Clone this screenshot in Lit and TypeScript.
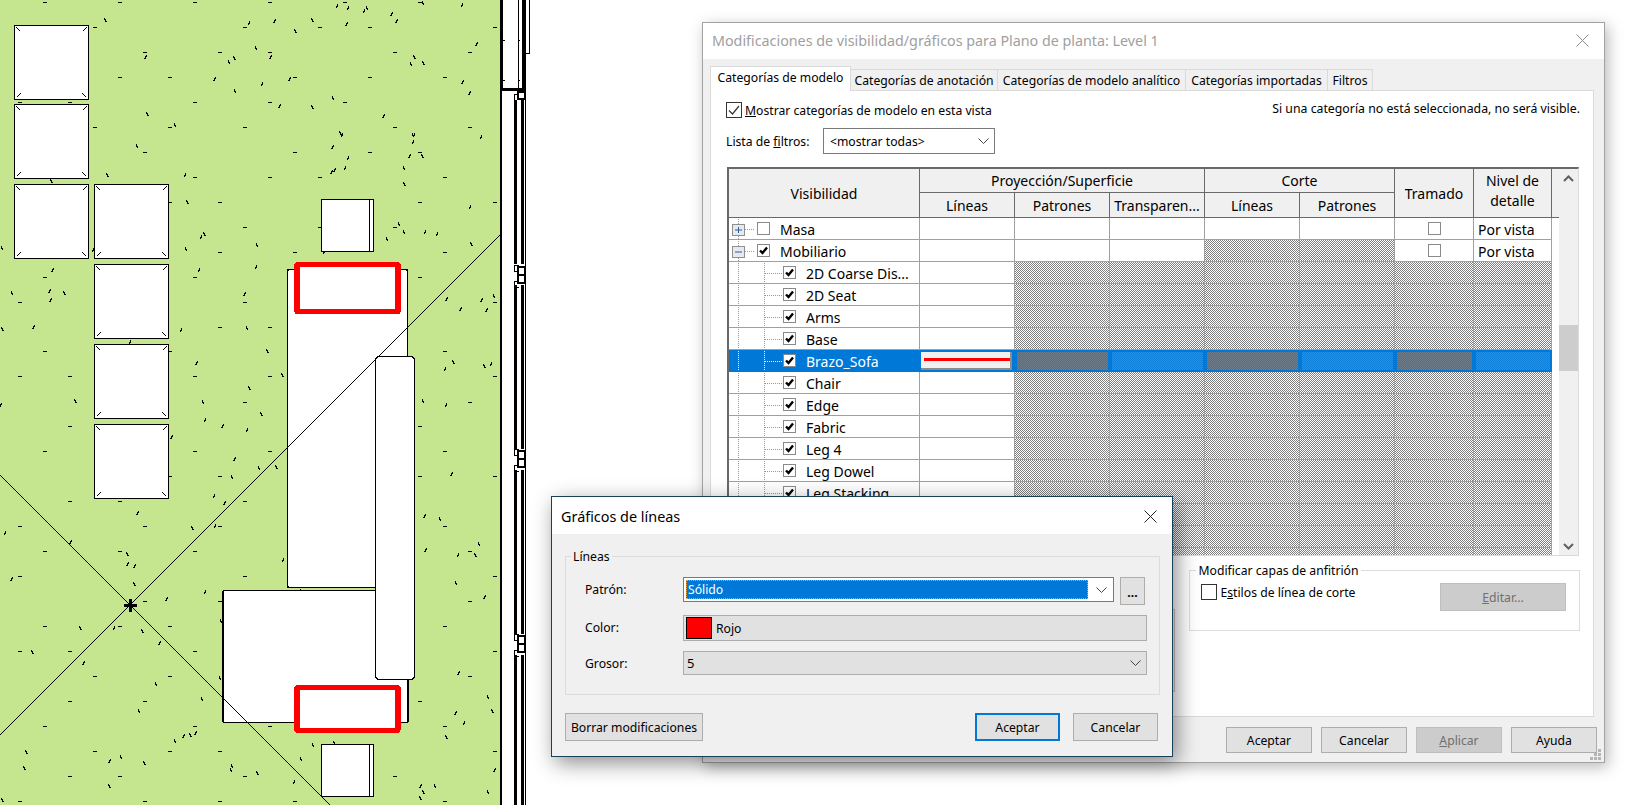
import { LitElement, html, css, svg } from "lit";
import { customElement } from "lit/decorators.js";

/* ---------- CAD canvas ---------- */
const H_ROWS: [number, number, number[]][] = [
  [0, 7, [130,348,566,784,1002,1220]],[0, 82, [275,711,929,1075,1438]],[0, 157, [420,638,784,1147,1365]],
  [0, 232, [348,493,857,1075,1292]],[0, 307, [57,203,566,784,1002]],[0, 382, [275,493,711,1147,1365]],
  [0, 457, [420,857,1075,1220]],[0, 532, [566,784,929,1292]],[0, 607, [493,638,1220,1438]],
  [0, 682, [711,929,1147]],[0, 757, [638,857,1292]],[0, 832, [130,566,1220]],[0, 907, [57,711,1438]],
  [0, 982, [638,784]],[0, 1054, [130,493,1292]],[0, 1129, [57,203,566,784,1438]],
  [400, 5, [711,1365]],[400, 79, [203,1220]],[400, 154, [130,566,784,1292]],[400, 229, [493,638,1220,1438]],
  [400, 304, [203,348,711]],[400, 379, [57,420,638,1292]],[400, 454, [130,348,566,1365]],[400, 529, [57,711,1438]],
  [400, 604, [420,638,1365]],[400, 679, [130,348,493,1292]],[400, 754, [57,203,566,1438]],[400, 829, [275,493,1365]],
  [400, 904, [203,420,1220]],[400, 979, [130,566,784,1292]],[400, 1054, [275,493,638,1438]],
  [400, 1129, [203,348,711,1147]],[400, 1204, [57,420,638,857,1292]],
];
function seeded(seed: number) {
  let s = seed;
  return () => { s = (s * 1664525 + 1013904223) >>> 0; return s / 4294967296; };
}
function grassTicks() {
  const out: string[] = [];
  for (const [base, zy, xs] of H_ROWS) {
    const y = Math.round(base + zy / 3) + 0.5;
    for (const zx of xs) {
      const x = Math.round(zx / 2.904);
      out.push(`M${x - 2} ${y}h4`);
    }
  }
  const r = seeded(77);
  for (let i = 0; i < 250; i++) {
    const x = Math.round(r() * 496) + 0.5;
    const y = Math.round(r() * 800) + 0.5;
    const dir = r() < 0.5 ? 1 : -1;
    const w = r() < 0.5 ? 1 : 2;
    out.push(`M${x} ${y}l${dir * w} 4`);
  }
  return out.join("");
}
const TICKS = grassTicks();

const SQUARES = [
  [14.5, 25.5],[14.5, 104.5],[14.5, 184.5],[94.5, 184.5],[94.5, 264.5],[94.5, 344.5],[94.5, 424.5],
];
const SQ = 74;

@customElement("cad-canvas")
class CadCanvas extends LitElement {
  static styles = css`
    :host { display: block; width: 540px; height: 805px; }
    svg { display: block; }
    .k { fill: none; stroke: #000; stroke-width: 1; }
    .w2 { fill: #fff; stroke: #000; stroke-width: 1.4; }
    .red { fill: #fff; stroke: #f00; stroke-width: 5.4; }
    .blk { fill: #000; }
  `;
  square(x: number, y: number) {
    const r = x + SQ, b = y + SQ;
    return svg`<rect class="w2" x=${x} y=${y} width=${SQ} height=${SQ}></rect>
      <path class="k" d="M${x + 2} ${y + 2}l4 4M${r - 2} ${y + 2}l-4 4M${x + 2} ${b - 2}l4 -4M${r - 2} ${b - 2}l-4 -4"></path>`;
  }
  side(y: number) {
    return svg`<rect class="w2" x="321.5" y=${y} width="52" height="52"></rect>
      <path class="k" d="M369.5 ${y}v52"></path>`;
  }
  cluster(y: number) {
    return svg`<path class="k" d="M518.5 ${y - 2}h-4v6h3M518.5 ${y + 20}h-4v-6h3" ></path>
      <rect x="518" y=${y} width="7" height="8" fill="#fff" stroke="#000" stroke-width="2"></rect>
      <rect x="518" y=${y + 8} width="7" height="8" fill="#fff" stroke="#000" stroke-width="2"></rect>`;
  }
  render() {
    const segs = [[100, 264], [285, 449], [470, 634], [655, 805]];
    return html`<svg width="540" height="805" viewBox="0 0 540 805" shape-rendering="crispEdges">
      <rect x="0" y="0" width="500" height="805" fill="#c5e58f"></rect>
      <path class="k" d=${TICKS}></path>
      ${SQUARES.map(([x, y]) => this.square(x, y))}
      ${this.side(199.5)} ${this.side(744.5)}
      <rect class="w2" x="287.5" y="269.5" width="120" height="318" rx="2"></rect>
      <rect class="w2" x="223" y="590.5" width="185" height="132" rx="2"></rect>
      <path class="k" d="M500 235L0 735M0 475L330 805"></path>
      <rect class="w2" x="375.5" y="356.5" width="39" height="323" rx="4"></rect>
      <rect class="red" x="297" y="264.7" width="101" height="47" rx="1"></rect>
      <rect class="red" x="297" y="687.7" width="101" height="42.5" rx="1"></rect>
      <rect class="blk" x="124" y="604" width="13" height="3"></rect>
      <rect class="blk" x="129" y="599" width="3" height="13"></rect>
      <rect class="blk" x="500" y="0" width="1.5" height="805"></rect>
      <rect class="blk" x="500" y="0" width="3" height="91"></rect>
      <rect class="blk" x="500" y="88" width="26" height="3"></rect>
      <rect class="blk" x="522" y="0" width="4" height="91"></rect>
      <rect class="blk" x="518" y="0" width="1" height="88"></rect>
      <path class="k" d="M529.5 0V53H526M503 40.5h2M503 80.5h2M518 40.5h2M518 80.5h2"></path>
      ${segs.map(([a, b]) => svg`
        <rect class="blk" x="514" y=${a} width="3" height=${b - a}></rect>
        <rect class="blk" x="521" y=${a} width="2.5" height=${b - a}></rect>`)}
      <rect class="blk" x="525" y="91" width="1" height="714"></rect>
      <rect x="518" y="92" width="7" height="7" fill="#fff" stroke="#000" stroke-width="2"></rect>
      <path class="k" d="M514.5 100V94h3"></path>
      ${this.cluster(267)} ${this.cluster(451)} ${this.cluster(636)}
    </svg>`;
  }
}

/* ---------- shared bits ---------- */
const shared = css`
  * { box-sizing: border-box; }
  u { text-decoration: underline; text-underline-offset: 1px; }
  .btn {
    display: flex; align-items: center; justify-content: center;
    background: #e1e1e1; border: 1px solid #adadad; color: #000;
    font-size: 12.2px; white-space: nowrap;
  }
  .btn.off { background: #ccc; color: #6f6f6f; border-color: #bfbfbf; }
  .chev { display: block; flex: none; }
  fieldset { margin: 0; min-width: 0; border: 1px solid #dcdcdc; }
  legend { font-size: 12.2px; line-height: 17px; padding: 0 2px; color: #000; }
`;
const chevron = (c = "#444") => html`<svg class="chev" width="11" height="6" viewBox="0 0 11 6"><path d="M.5 .5L5.5 5.5L10.5 .5" fill="none" stroke=${c}></path></svg>`;
const closeX = (c: string, s = 13) => html`<svg width=${s} height=${s} viewBox="0 0 13 13"><path d="M.5 .5L12.5 12.5M12.5 .5L.5 12.5" fill="none" stroke=${c}></path></svg>`;
const bigBox = (checked: boolean) => html`<svg width="16" height="16" viewBox="0 0 16 16"><rect x=".5" y=".5" width="15" height="15" fill="#fff" stroke="#333"></rect>${checked ? svg`<path d="M3 8.5L6.5 12L13 4" fill="none" stroke="#333" stroke-width="1.2"></path>` : ""}</svg>`;

/* ---------- table tree cell drawing ---------- */
const boxAt = (x: number, on: boolean) => svg`
  <rect x=${x + 0.5} y="4.5" width="12" height="12" fill="#fff" stroke="#8a8a8a"></rect>
  ${on ? svg`<path d="M${x + 3} 10.5L${x + 5.5} 13L${x + 10} 7.5" fill="none" stroke="#000" stroke-width="2.4"></path>` : ""}`;

type Row = { name: string; level: 0 | 1; on: boolean; exp?: "+" | "-"; picked?: boolean; hatch: number[] };
const CHILD_HATCH = [2, 3, 4, 5, 6, 7];
const ROWS: Row[] = [
  { name: "Masa", level: 0, on: false, exp: "+", hatch: [] },
  { name: "Mobiliario", level: 0, on: true, exp: "-", hatch: [4, 5] },
  ...["2D Coarse Dis...", "2D Seat", "Arms", "Base"].map((name) => ({ name, level: 1 as const, on: true, hatch: CHILD_HATCH })),
  { name: "Brazo_Sofa", level: 1, on: true, picked: true, hatch: CHILD_HATCH },
  ...["Chair", "Edge", "Fabric", "Leg 4", "Leg Dowel", "Leg Stacking", "", "", "", ""].map((name) => ({ name, level: 1 as const, on: true, hatch: CHILD_HATCH })),
];

/* ---------- Visibility dialog ---------- */
@customElement("vg-dialog")
class VgDialog extends LitElement {
  static styles = [shared, css`
    :host {
      box-sizing: border-box;
      display: flex; flex-direction: column; position: absolute; left: 702px; top: 22px;
      width: 903px; height: 741px; background: #f0f0f0; border: 1px solid #a3a3a3;
      box-shadow: 3px 4px 14px rgba(0,0,0,.28);
      font-family: "Noto Sans", sans-serif; font-size: 12.2px; color: #000;
    }
    .title { height: 36px; flex: none; background: #fff; display: flex; align-items: center; justify-content: space-between; padding: 0 15px 2px 9px; color: #a0a0a0; font-size: 14.3px; }
    .tabs { height: 31px; flex: none; display: flex; align-items: flex-end; padding-left: 7px; position: relative; z-index: 1; }
    .tab { height: 21px; border: 1px solid #dadada; border-bottom: none; border-left: none; display: flex; align-items: center; justify-content: center; white-space: nowrap; }
    .tab.on { height: 25px; background: #fff; border-left: 1px solid #dadada; margin-bottom: -1px; padding-bottom: 3px; }
    .panel { flex: 1; margin: 0 10px 0 7px; background: #fff; border: 1px solid #dadada; padding: 11px 13px 0 16px; display: flex; flex-direction: column; min-height: 0; }
    .top { display: flex; justify-content: space-between; height: 16px; margin-left: -1px; }
    .chk { display: flex; align-items: center; gap: 3px; white-space: nowrap; }
    .chk svg { flex: none; display: block; }
    .note { line-height: 14px; font-size: 12.3px; }
    .filter { display: flex; align-items: center; height: 26px; margin: 10px 0 0 -1px; }
    .filter label { width: 97px; flex: none; }
    .combo { width: 172px; height: 26px; border: 1px solid #7a7a7a; display: flex; align-items: center; justify-content: space-between; padding: 0 5px 0 6px; }
    .table { margin-top: 13px; height: 389px; width: 852px; flex: none; border-left: 2px solid #696969; border-top: 2px solid #696969; border-right: 1px solid #dadada; border-bottom: 1px solid #dadada; display: flex; overflow: hidden; position: relative; }
    .grid-area { width: 830px; flex: none; overflow: hidden; }
    .head { display: grid; grid-template-columns: 191px 95px 95px 95px 95px 95px 79px 78px 7px; grid-template-rows: 24px 25px; background: #f0f0f0; }
    .hc { display: flex; align-items: center; justify-content: center; text-align: center; font-size: 14px; line-height: 20px; border-right: 1px solid #696969; border-bottom: 1px solid #696969; white-space: nowrap; }
    .vis { grid-row: 1 / span 2; grid-column: 1; padding-top: 1px; }
    .pro { grid-row: 1; grid-column: 2 / span 3; }
    .cor { grid-row: 1; grid-column: 5 / span 2; }
    .tra { grid-row: 1 / span 2; grid-column: 7; padding-top: 1px; }
    .niv { grid-row: 1 / span 2; grid-column: 8; padding-bottom: 5px; }
    .r2 { grid-row: 2; padding-top: 1px; }
    .gap { grid-row: 1 / span 2; grid-column: 9; border-bottom: 1px solid #696969; }
    .row { display: grid; grid-template-columns: 191px 95px 95px 95px 95px 95px 79px 78px; width: 823px; height: 22px; background: #fff; }
    .cell { border-right: 1px solid #a0a0a0; border-bottom: 1px solid #a0a0a0; display: flex; align-items: center; font-size: 14px; white-space: nowrap; overflow: hidden; }
    .cell span { padding-top: 2px; }
    .cell.last { padding-left: 4px; }
    .cell.mid { justify-content: center; }
    .cell svg { display: block; flex: none; }
    .hatch { background: repeating-conic-gradient(#7f7f7f 0 25%, #fff 0 50%) 0 0 / 2px 2px; }
    .row.picked { background: #0078d7; }
    .row.picked .cell { border-color: #0078d7; }
    .row.picked .cell.name { color: #fff; }
    .row.picked .hatch { background: repeating-conic-gradient(#6f7d8a 0 25%, #0f80da 0 50%) 0 0 / 2px 2px; border: 2px solid #0078d7; }
    .lbtn { width: 91px; height: 18px; margin-left: 1px; background: #f0f0f0; border-right: 2px solid #8c8c8c; border-bottom: 2px solid #8c8c8c; display: flex; align-items: center; padding-left: 3px; flex: none; }
    .lbtn i { display: block; width: 86px; height: 3px; background: #f00; }
    .sb { width: 19px; flex: none; background: #f0f0f0; display: flex; flex-direction: column; align-items: center; justify-content: space-between; padding: 6px 0 5px; position: relative; }
    .thumb { position: absolute; left: 0; right: 0; top: 156px; height: 46px; background: #cdcdcd; }
    .bottom { display: flex; margin-top: 6px; gap: 14px; align-items: flex-start; }
    .behind { width: 449px; height: 83px; margin-top: 47px; background: #f4f4f4; border: 1px solid #c9c9c9; }
    .host { width: 391px; height: 69px; padding: 4px 13px 0 11px; display: flex; justify-content: space-between; align-items: flex-start; }
    .host legend { margin-left: -5px; }
    .host .chk { margin-top: 1px; align-items: flex-start; }
    .host .btn { width: 126px; height: 28px; }
    .footer { height: 45px; flex: none; display: flex; justify-content: flex-end; gap: 9px; padding: 10px 7px 0 0; }
    .footer .btn { width: 86px; height: 26px; }
    .grip { position: absolute; right: 2px; bottom: 1px; display: block; }
  `];
  render() {
    return html`
      <div class="title"><span>Modificaciones de visibilidad/gráficos para Plano de planta: Level 1</span>${closeX("#8c8c8c")}</div>
      <div class="tabs">
        <div class="tab on" style="width:141px">Categorías de modelo</div>
        <div class="tab" style="width:147px">Categorías de anotación</div>
        <div class="tab" style="width:188px">Categorías de modelo analítico</div>
        <div class="tab" style="width:142px">Categorías importadas</div>
        <div class="tab" style="width:45px">Filtros</div>
      </div>
      <div class="panel">
        <div class="top">
          <div class="chk">${bigBox(true)}<span><u>M</u>ostrar categorías de modelo en esta vista</span></div>
          <div class="note">Si una categoría no está seleccionada, no será visible.</div>
        </div>
        <div class="filter"><label>Lista de <u>f</u>iltros:</label><div class="combo"><span>&lt;mostrar todas&gt;</span>${chevron()}</div></div>
        <div class="table">
          <div class="grid-area">
            <div class="head">
              <div class="hc vis">Visibilidad</div>
              <div class="hc pro">Proyección/Superficie</div>
              <div class="hc cor">Corte</div>
              <div class="hc tra">Tramado</div>
              <div class="hc niv">Nivel de<br />detalle</div>
              <div class="hc r2">Líneas</div>
              <div class="hc r2">Patrones</div>
              <div class="hc r2">Transparen...</div>
              <div class="hc r2">Líneas</div>
              <div class="hc r2">Patrones</div>
              <div class="gap"></div>
            </div>
            ${ROWS.map((r) => this.renderRow(r))}
          </div>
          <div class="sb">
            <svg class="chev" width="11" height="7" viewBox="0 0 11 7"><path d="M1 6L5.5 1.5L10 6" fill="none" stroke="#606060" stroke-width="2"></path></svg>
            <div class="thumb"></div>
            <svg class="chev" width="11" height="7" viewBox="0 0 11 7"><path d="M1 1L5.5 5.5L10 1" fill="none" stroke="#606060" stroke-width="2"></path></svg>
          </div>
        </div>
        <div class="bottom">
          <div class="behind"></div>
          <fieldset class="host">
            <legend>Modificar capas de anfitrión</legend>
            <div class="chk">${bigBox(false)}<span>E<u>s</u>tilos de línea de corte</span></div>
            <div class="btn off"><span><u>E</u>ditar...</span></div>
          </fieldset>
        </div>
      </div>
      <div class="footer">
        <div class="btn">Aceptar</div>
        <div class="btn">Cancelar</div>
        <div class="btn off"><span><u>A</u>plicar</span></div>
        <div class="btn">Ayuda</div>
      </div>
      <svg class="grip" width="12" height="12" viewBox="0 0 12 12"><path fill="#b5b5b5" d="M8 0h3v3H8zM4 4h3v3H4zM8 4h3v3H8zM0 8h3v3H0zM4 8h3v3H4zM8 8h3v3H8z"></path></svg>
    `;
  }
  renderRow(r: Row) {
    const color = r.picked ? "#fff" : "#9a9a9a";
    const expBox = r.exp
      ? svg`<rect x="3.5" y="6.5" width="12" height="11" fill="#e6e9ee" stroke="#8f8f8f"></rect>
            <path d="M6 12h7${r.exp === "+" ? "M9.5 9v6" : ""}" stroke="#2f5f9e" fill="none"></path>
            <path d="M16 11.5h10" stroke=${color} stroke-dasharray="1 1" fill="none"></path>`
      : "";
    const drawn = r.level === 0
      ? svg`<path d="M9.5 -1V6M9.5 18V22" stroke=${color} stroke-dasharray="1 1" fill="none"></path>${expBox}${boxAt(28, r.on)}`
      : svg`<path d="M9.5 -1V22M35.5 -1V22M36 11.5h18" stroke=${color} stroke-dasharray="1 1" fill="none"></path>${boxAt(54, r.on)}`;
    const w = r.level === 0 ? 51 : 77;
    return html`<div class="row ${r.picked ? "picked" : ""}">
      <div class="cell name"><svg width=${w} height="21" viewBox="0 0 ${w} 21">${drawn}</svg><span>${r.name}</span></div>
      ${[1, 2, 3, 4, 5, 6, 7].map((c) => {
        if (r.hatch.includes(c)) return html`<div class="cell hatch"></div>`;
        if (c === 1 && r.picked) return html`<div class="cell"><div class="lbtn"><i></i></div></div>`;
        if (c === 6) return html`<div class="cell mid"><svg width="13" height="13" viewBox="0 0 13 13"><rect x=".5" y=".5" width="12" height="12" fill="#fff" stroke="#8a8a8a"></rect></svg></div>`;
        if (c === 7) return html`<div class="cell last"><span>Por vista</span></div>`;
        return html`<div class="cell"></div>`;
      })}
    </div>`;
  }
}

/* ---------- Line graphics dialog ---------- */
@customElement("line-dialog")
class LineDialog extends LitElement {
  static styles = [shared, css`
    :host {
      box-sizing: border-box;
      display: flex; flex-direction: column; position: absolute; left: 551px; top: 496px;
      width: 622px; height: 261px; background: #f0f0f0; border: 1px solid #17405a;
      box-shadow: 4px 6px 20px rgba(0,0,0,.45);
      font-family: "Noto Sans", sans-serif; font-size: 12.2px; color: #000; z-index: 2;
    }
    .title { height: 37px; flex: none; background: #fff; display: flex; align-items: center; justify-content: space-between; padding: 1px 15px 0 9px; font-size: 14.4px; }
    fieldset { margin: 14px 12px 0 13px; height: 147px; padding: 12px 13px 0 19px; flex: none; }
    legend { margin-left: -14px; }
    .form { display: grid; grid-template-columns: 98px 464px; grid-template-rows: 28px 26px 24px; row-gap: 10px; align-items: start; }
    .lab { line-height: 24px; padding-top: 1px; }
    .pat { display: flex; gap: 6px; }
    .combo { flex: 1; height: 25px; background: #fff; border: 1px solid #7a7a7a; display: flex; align-items: center; padding: 2px 6px 2px 2px; }
    .val { flex: 1; height: 100%; background: #0078d7; color: #fff; border: 1px dotted #e8a24a; display: flex; align-items: center; padding-left: 1px; margin-right: 8px; }
    .more { width: 25px; margin-right: 2px; height: 28px; align-items: flex-end; padding-bottom: 5px; line-height: 12px; font-weight: 700; }
    .col { height: 26px; background: #e1e1e1; border: 1px solid #adadad; display: flex; align-items: center; gap: 4px; padding-left: 2px; }
    .sw { width: 26px; height: 22px; background: #f00; border: 1px solid #000; }
    .gro { height: 24px; background: #e1e1e1; border: 1px solid #adadad; display: flex; align-items: center; justify-content: space-between; padding: 0 5px 0 3px; font-size: 13px; }
    .acts { display: flex; justify-content: space-between; margin: 18px 14px 0 13px; }
    .acts .btn { height: 28px; width: 85px; }
    .acts .clear { width: 138px; }
    .rt { display: flex; gap: 13px; }
    .btn.def { border: 2px solid #0078d7; }
  `];
  render() {
    return html`
      <div class="title"><span>Gráficos de líneas</span>${closeX("#222")}</div>
      <fieldset>
        <legend>Líneas</legend>
        <div class="form">
          <div class="lab">Patrón:</div>
          <div class="pat">
            <div class="combo"><div class="val">Sólido</div>${chevron()}</div>
            <div class="btn more">...</div>
          </div>
          <div class="lab">Color:</div>
          <div class="col"><div class="sw"></div><span>Rojo</span></div>
          <div class="lab">Grosor:</div>
          <div class="gro"><span>5</span>${chevron()}</div>
        </div>
      </fieldset>
      <div class="acts">
        <div class="btn clear">Borrar modificaciones</div>
        <div class="rt"><div class="btn def">Aceptar</div><div class="btn">Cancelar</div></div>
      </div>
    `;
  }
}

@customElement("app-root")
export class AppRoot extends LitElement {
  static styles = css`
    :host { display: block; position: relative; width: 1640px; height: 805px; overflow: hidden; background: #fff; }
  `;
  render() {
    return html`<cad-canvas></cad-canvas><vg-dialog></vg-dialog><line-dialog></line-dialog>`;
  }
}
